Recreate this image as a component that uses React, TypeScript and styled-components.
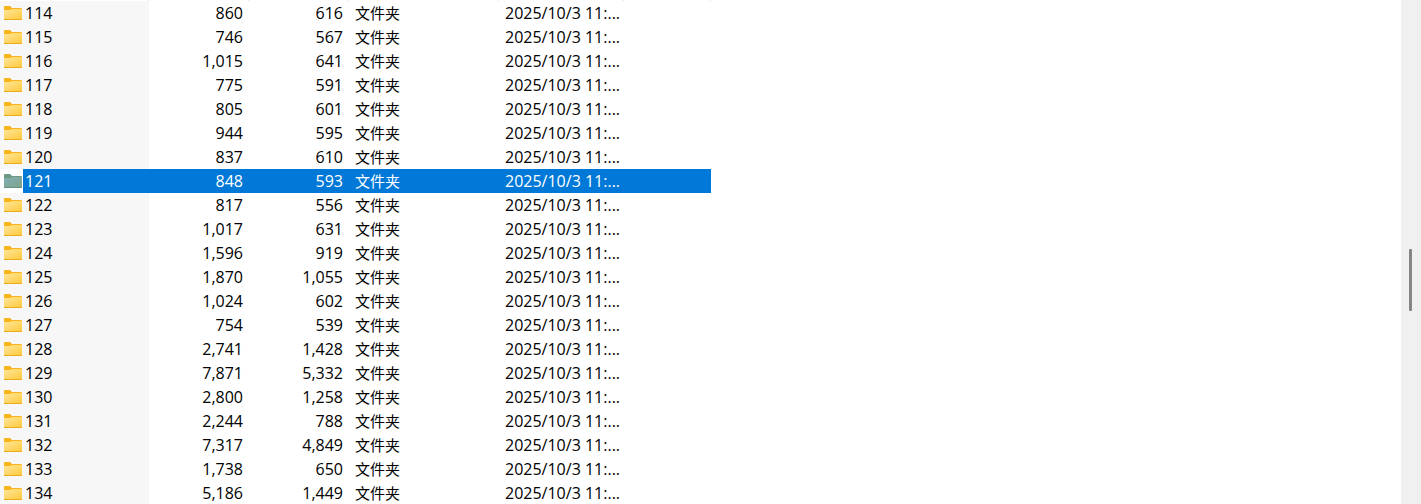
import React from "react";
import styled, { createGlobalStyle } from "styled-components";

const GlobalStyle = createGlobalStyle`
  *, *::before, *::after { box-sizing: border-box; }
  html, body, #root { height: 100%; }
  body {
    margin: 0;
    overflow: hidden;
    background: #ffffff;
    color: #000000;
    font-family: "Open Sans", "Noto Sans CJK SC", sans-serif;
    font-size: 16px;
  }
`;

const Window = styled.main`
  display: flex;
  height: 100%;
  overflow: hidden;
`;

const ListArea = styled.section`
  flex: 1;
  min-width: 0;
  overflow: hidden;
`;

const FileTable = styled.table`
  table-layout: fixed;
  width: 711px;
  border-collapse: separate;
  border-spacing: 0;
`;

const HeaderEdge = styled.td`
  height: 1px;
  padding: 0;
  border-right: 1px solid #e5e5e5;
`;

const Row = styled.tr<{ $selected: boolean }>`
  height: 24px;
  line-height: 24px;
  color: ${(p) => (p.$selected ? "#ffffff" : "#000000")};
  background: ${(p) => (p.$selected ? "#0078d7" : "transparent")};
`;

const Cell = styled.td<{ $align?: "left" | "right" }>`
  height: 24px;
  padding: 0 6px;
  text-align: ${(p) => p.$align ?? "left"};
  vertical-align: top;
  white-space: nowrap;
`;

const NameCell = styled(Cell)<{ $selected: boolean }>`
  padding: 0;
  background: ${(p) => (p.$selected ? "#0078d7" : "#f7f7f7")};
`;

const NameContent = styled.div`
  display: flex;
  height: 24px;
`;

const IconBox = styled.span<{ $selected: boolean }>`
  display: flex;
  align-items: center;
  width: 23px;
  padding-left: 4px;
  background: ${(p) => (p.$selected ? "#ffffff" : "transparent")};
`;

const Name = styled.span`
  padding-left: 2px;
`;

const TypeText = styled.span`
  font-family: "Noto Sans CJK SC", sans-serif;
  font-size: 15px;
`;

const ScrollTrack = styled.div`
  display: flex;
  flex-direction: column;
  align-items: flex-start;
  width: 20px;
  padding-left: 8px;
  background: #f0f0f0;

  &::before { content: ""; flex: 249; }
  &::after { content: ""; flex: 193; }
`;

const ScrollThumb = styled.div`
  flex: 62;
  width: 3px;
  border-radius: 1px;
  background: #858585;
`;

function FolderIcon({ selected }: { selected: boolean }) {
  const tab = selected ? "#6b9a80" : "#f9b41c";
  const edge = selected ? "#638f84" : "#eda922";
  return (
    <svg width="18" height="14" viewBox="0 0 18 14" aria-hidden="true">
      <path d="M0 1Q0 0 1 0H6L8 2H17Q18 2 18 3V13H0Z" fill={tab} />
      <path d="M0 4H6L8 3H18V13H0Z" fill={selected ? "url(#folderSelected)" : "url(#folderPlain)"} />
      <path d="M0 13H18V14H0Z" fill={edge} />
    </svg>
  );
}

const rows: [string, string, string][] = [
  ["114", "860", "616"],
  ["115", "746", "567"],
  ["116", "1,015", "641"],
  ["117", "775", "591"],
  ["118", "805", "601"],
  ["119", "944", "595"],
  ["120", "837", "610"],
  ["121", "848", "593"],
  ["122", "817", "556"],
  ["123", "1,017", "631"],
  ["124", "1,596", "919"],
  ["125", "1,870", "1,055"],
  ["126", "1,024", "602"],
  ["127", "754", "539"],
  ["128", "2,741", "1,428"],
  ["129", "7,871", "5,332"],
  ["130", "2,800", "1,258"],
  ["131", "2,244", "788"],
  ["132", "7,317", "4,849"],
  ["133", "1,738", "650"],
  ["134", "5,186", "1,449"],
];

const columns = [149, 100, 100, 150, 125, 87];

export default function App() {
  const selectedName = "121";
  return (
    <>
      <GlobalStyle />
      <Window>
        <ListArea>
          <FileTable>
            <colgroup>
              {columns.map((width, i) => (
                <col key={i} width={width} />
              ))}
            </colgroup>
            <tbody>
              <tr>
                {columns.map((_, i) => (
                  <HeaderEdge key={i} />
                ))}
              </tr>
              {rows.map(([name, total, files]) => {
                const selected = name === selectedName;
                return (
                  <Row key={name} $selected={selected} aria-selected={selected}>
                    <NameCell $selected={selected}>
                      <NameContent>
                        <IconBox $selected={selected}>
                          <FolderIcon selected={selected} />
                        </IconBox>
                        <Name>{name}</Name>
                      </NameContent>
                    </NameCell>
                    <Cell $align="right">{total}</Cell>
                    <Cell $align="right">{files}</Cell>
                    <Cell>
                      <TypeText>文件夹</TypeText>
                    </Cell>
                    <Cell>2025/10/3 11:...</Cell>
                    <Cell />
                  </Row>
                );
              })}
            </tbody>
          </FileTable>
          <svg width="0" height="0" aria-hidden="true">
            <defs>
              <linearGradient id="folderPlain" x1="0" y1="0" x2="1" y2="1">
                <stop offset="0" stopColor="#ffe69c" />
                <stop offset="1" stopColor="#ffca3f" />
              </linearGradient>
              <linearGradient id="folderSelected" x1="0" y1="0" x2="1" y2="1">
                <stop offset="0" stopColor="#80aeb4" />
                <stop offset="1" stopColor="#7fa38c" />
              </linearGradient>
            </defs>
          </svg>
        </ListArea>
        <ScrollTrack>
          <ScrollThumb />
        </ScrollTrack>
      </Window>
    </>
  );
}
